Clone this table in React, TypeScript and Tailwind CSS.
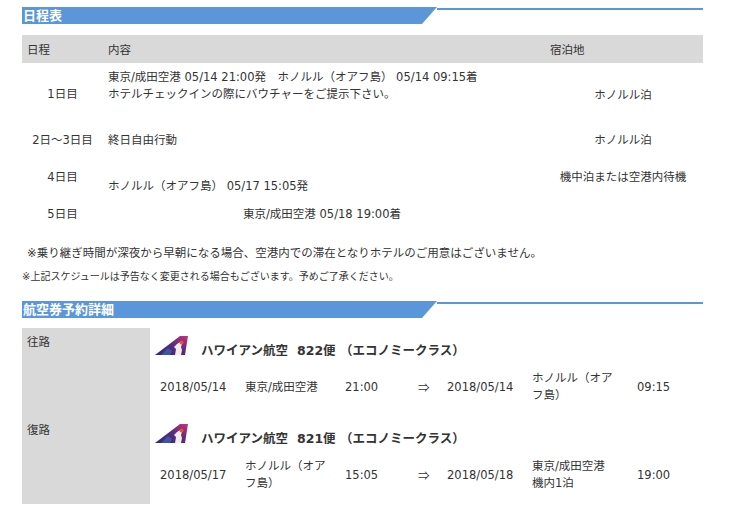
import React from "react";

const font = "font-['DejaVu_Sans','Noto_Sans_CJK_JP',sans-serif]";

function SectionHeader({ title }: { title: string }) {
  return (
    <div className="flex items-start">
      <div className="w-[415px] h-[17px] bg-[#5b96da] [clip-path:polygon(0_0,100%_0,calc(100%-15px)_100%,0_100%)] text-white font-bold text-[13px] leading-[18px] pl-[1px]">
        {title}
      </div>
      <div className="flex-1 h-[2px] mt-[1px] bg-[#5b96da]" />
    </div>
  );
}

function HawaiianLogo() {
  return (
    <svg width="34" height="20" viewBox="0 0 34 20">
      <defs>
        <linearGradient id="hg" x1="0" y1="1" x2="1" y2="0">
          <stop offset="0" stopColor="#2e2a72" />
          <stop offset="0.55" stopColor="#5a2c7e" />
          <stop offset="1" stopColor="#c9307a" />
        </linearGradient>
      </defs>
      <polygon points="0,19 25,0 33,0 30,19" fill="url(#hg)" />
      <path d="M20,19 L21,13 L19,11 L22,8 L25,6 L27,8 L26,11 L27,14 L26,19 Z" fill="#f3ece8" />
      <circle cx="26.5" cy="6.5" r="2" fill="#e8552a" />
      <path d="M6,19 L13,12 L17,15 L15,19 Z" fill="#3d5fb0" opacity="0.8" />
    </svg>
  );
}

type Leg = {
  date: string;
  from: React.ReactNode;
  dep: string;
  arrDate: string;
  to: React.ReactNode;
  arr: string;
};

function Flight({ label, flight, leg }: { label: string; flight: string; leg: Leg }) {
  return (
    <div className="flex h-[88px]">
      <div className="w-[128px] bg-[#d9d9d9] pl-[5px] pt-[6px] leading-[17px]">{label}</div>
      <div className="flex-1 pl-[5px]">
        <div className="flex items-center h-[34px] pt-[2px]">
          <HawaiianLogo />
          <span className="ml-[12px] font-bold text-[12.5px] mt-[10px]">
            ハワイアン航空<span className="ml-[9px]">{flight}便</span> （エコノミークラス）
          </span>
        </div>
        <div className="flex items-center h-[48px] leading-[17px] pt-[2px]">
          <div className="w-[90px] pl-[5px]">{leg.date}</div>
          <div className="w-[100px]"><div className="w-[86px]">{leg.from}</div></div>
          <div className="w-[73px]">{leg.dep}</div>
          <div className="w-[29px] font-['Noto_Sans_CJK_JP']">⇒</div>
          <div className="w-[85px]">{leg.arrDate}</div>
          <div className="w-[105px]"><div className="w-[88px]">{leg.to}</div></div>
          <div>{leg.arr}</div>
        </div>
      </div>
    </div>
  );
}

export default function App() {
  return (
    <div className={`${font} bg-white w-[730px] h-[510px] text-[#333] text-[11.5px] overflow-hidden`}>
      <div className="ml-[22px] w-[681px] pt-[7px]">
        <SectionHeader title="日程表" />

        <div className="mt-[11px]">
          <div className="flex h-[28px] items-center bg-[#d9d9d9] pt-[3px]">
            <div className="w-[81px] pl-[5px]">日程</div>
            <div className="flex-1 pl-[5px]">内容</div>
            <div className="w-[160px] pl-[7px]">宿泊地</div>
          </div>

          <div className="flex h-[60px] items-center leading-[17px] pt-[2px]">
            <div className="w-[81px] text-center pt-[1px]">1日目</div>
            <div className="flex-1 pl-[5px]">
              東京/成田空港 05/14 21:00発　ホノルル（オアフ島） 05/14 09:15着
              <br />
              ホテルチェックインの際にバウチャーをご提示下さい。
              <br />
              &nbsp;
            </div>
            <div className="w-[160px] text-center pt-[2px]">ホノルル泊</div>
          </div>

          <div className="flex h-[32px] items-center leading-[17px] pt-[2px]">
            <div className="w-[81px] text-center">2日〜3日目</div>
            <div className="flex-1 pl-[5px]">終日自由行動</div>
            <div className="w-[160px] text-center">ホノルル泊</div>
          </div>

          <div className="flex h-[43px] items-center leading-[17px] pt-[2px]">
            <div className="w-[81px] text-center">4日目</div>
            <div className="flex-1 pl-[5px]">
              &nbsp;
              <br />
              ホノルル（オアフ島） 05/17 15:05発
            </div>
            <div className="w-[160px] text-center">機中泊または空港内待機</div>
          </div>

          <div className="flex h-[30px] items-center leading-[17px] pt-[2px]">
            <div className="w-[81px] text-center">5日目</div>
            <div className="flex-1 pl-[140px]">東京/成田空港 05/18 19:00着</div>
            <div className="w-[160px]" />
          </div>
        </div>

        <p className="mt-[17px] pl-[5px] leading-[17px]">
          ※乗り継ぎ時間が深夜から早朝になる場合、空港内での滞在となりホテルのご用意はございません。
        </p>
        <p className="mt-[8px] text-[10px] leading-[14px]">
          ※上記スケジュールは予告なく変更される場合もございます。予めご了承ください。
        </p>

        <div className="mt-[17px]">
          <SectionHeader title="航空券予約詳細" />
        </div>

        <div className="mt-[10px]">
          <Flight
            label="往路"
            flight="822"
            leg={{
              date: "2018/05/14",
              from: "東京/成田空港",
              dep: "21:00",
              arrDate: "2018/05/14",
              to: "ホノルル（オアフ島）",
              arr: "09:15",
            }}
          />
          <Flight
            label="復路"
            flight="821"
            leg={{
              date: "2018/05/17",
              from: "ホノルル（オアフ島）",
              dep: "15:05",
              arrDate: "2018/05/18",
              to: (
                <>
                  東京/成田空港
                  <br />
                  機内1泊
                </>
              ),
              arr: "19:00",
            }}
          />
        </div>
      </div>
    </div>
  );
}
